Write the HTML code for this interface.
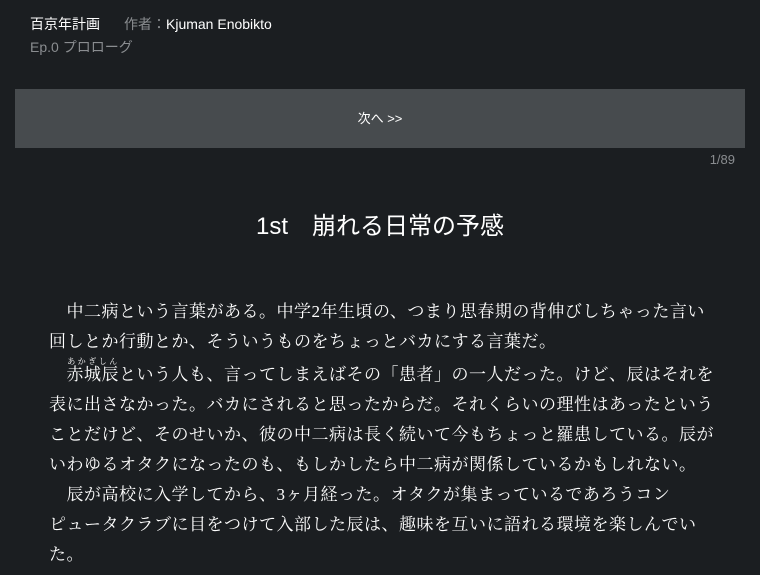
<!DOCTYPE html>
<html><head><meta charset="utf-8"><style>
body{margin:0;background:#1b1e21;width:760px;height:575px;overflow:hidden;font-family:"Liberation Sans","Noto Sans CJK JP",sans-serif;color:#fff}
.t{position:absolute;left:30px;top:14px;font-size:14px;white-space:nowrap}
.t .g{color:#8a8d90;margin-left:24px}
.ep{position:absolute;left:30px;top:37px;font-size:14px;color:#8a8d90}
.btn{position:absolute;left:15px;top:89px;width:730px;height:59px;background:#474b4e;color:#fff;font-size:13px;text-align:center;line-height:59px}
.pg{position:absolute;right:25px;top:152px;font-size:13px;color:#8a8d90}
h1{position:absolute;left:0;width:760px;top:206px;margin:0;text-align:center;font-size:24px;font-weight:normal}
.body{position:absolute;left:49px;top:297px;width:700px;font-family:"Liberation Serif","Noto Serif CJK SC",serif;font-size:17px;letter-spacing:0.5px;line-height:30px;color:#fff;white-space:nowrap}
.body p{margin:0}
ruby rt{font-size:8px;line-height:1;letter-spacing:1px}
</style></head><body>
<div class="t">百京年計画<span class="g">作者：</span>Kjuman Enobikto</div>
<div class="ep">Ep.0 プロローグ</div>
<div class="btn">次へ &gt;&gt;</div>
<div class="pg">1/89</div>
<h1>1st　崩れる日常の予感</h1>
<div class="body">
<p>　中二病という言葉がある。中学2年生頃の、つまり思春期の背伸びしちゃった言い<br>回しとか行動とか、そういうものをちょっとバカにする言葉だ。</p>
<p>　<ruby>赤城辰<rt>あかぎしん</rt></ruby>という人も、言ってしまえばその「患者」の一人だった。けど、辰はそれを<br>表に出さなかった。バカにされると思ったからだ。それくらいの理性はあったという<br>ことだけど、そのせいか、彼の中二病は長く続いて今もちょっと羅患している。辰が<br>いわゆるオタクになったのも、もしかしたら中二病が関係しているかもしれない。</p>
<p>　辰が高校に入学してから、3ヶ月経った。オタクが集まっているであろうコン<br>ピュータクラブに目をつけて入部した辰は、趣味を互いに語れる環境を楽しんでい<br>た。</p>
</div>
</body></html>
